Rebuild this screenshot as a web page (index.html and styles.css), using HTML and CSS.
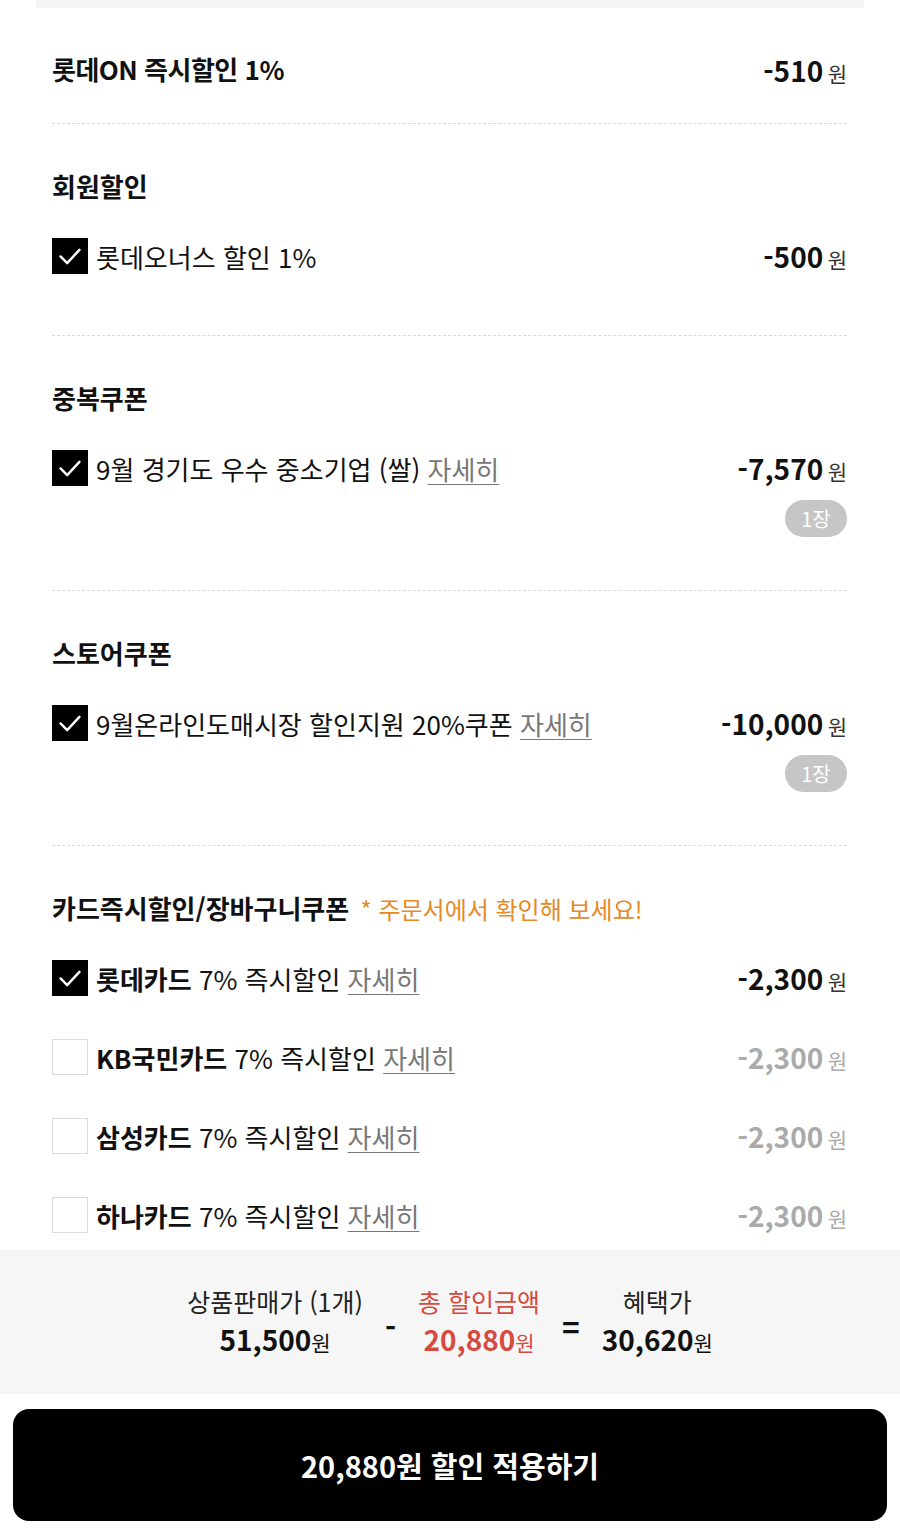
FILE: index.html
```html
<!DOCTYPE html>
<html lang="ko">
<head>
<meta charset="utf-8">
<title>할인 적용</title>
<link rel="stylesheet" href="styles.css">
</head>
<body>
<div class="topbar"></div>
<div class="list">
  <section class="sec sec-first">
    <div class="row">
      <div class="title-lg">롯데ON 즉시할인 1%</div>
      <div class="amt"><b>-510</b> <span>원</span></div>
    </div>
  </section>

  <section class="sec">
    <h2 class="head">회원할인</h2>
    <div class="row">
      <div class="left">
        <span class="cb on"><svg viewBox="0 0 36 36"><path d="M8 18.5 L15 25.5 L28 11.5" /></svg></span>
        <span class="label">롯데오너스 할인 1%</span>
      </div>
      <div class="amt"><b>-500</b> <span>원</span></div>
    </div>
    <div class="pad-b1"></div>
  </section>

  <section class="sec">
    <h2 class="head">중복쿠폰</h2>
    <div class="row">
      <div class="left">
        <span class="cb on"><svg viewBox="0 0 36 36"><path d="M8 18.5 L15 25.5 L28 11.5" /></svg></span>
        <span class="label">9월 경기도 우수 중소기업 (쌀) <a class="more">자세히</a></span>
      </div>
      <div class="amt"><b>-7,570</b> <span>원</span></div>
    </div>
    <div class="badge-row"><span class="badge">1장</span></div>
  </section>

  <section class="sec">
    <h2 class="head">스토어쿠폰</h2>
    <div class="row">
      <div class="left">
        <span class="cb on"><svg viewBox="0 0 36 36"><path d="M8 18.5 L15 25.5 L28 11.5" /></svg></span>
        <span class="label">9월온라인도매시장 할인지원 20%쿠폰 <a class="more">자세히</a></span>
      </div>
      <div class="amt"><b>-10,000</b> <span>원</span></div>
    </div>
    <div class="badge-row"><span class="badge">1장</span></div>
  </section>

  <section class="sec sec-last">
    <h2 class="head">카드즉시할인/장바구니쿠폰 <span class="note">* 주문서에서 확인해 보세요!</span></h2>
    <div class="cards">
      <div class="row">
        <div class="left">
          <span class="cb on"><svg viewBox="0 0 36 36"><path d="M8 18.5 L15 25.5 L28 11.5" /></svg></span>
          <span class="label"><strong>롯데카드</strong> 7% 즉시할인 <a class="more">자세히</a></span>
        </div>
        <div class="amt"><b>-2,300</b> <span>원</span></div>
      </div>
      <div class="row">
        <div class="left">
          <span class="cb"></span>
          <span class="label"><strong>KB국민카드</strong> 7% 즉시할인 <a class="more">자세히</a></span>
        </div>
        <div class="amt off"><b>-2,300</b> <span>원</span></div>
      </div>
      <div class="row">
        <div class="left">
          <span class="cb"></span>
          <span class="label"><strong>삼성카드</strong> 7% 즉시할인 <a class="more">자세히</a></span>
        </div>
        <div class="amt off"><b>-2,300</b> <span>원</span></div>
      </div>
      <div class="row">
        <div class="left">
          <span class="cb"></span>
          <span class="label"><strong>하나카드</strong> 7% 즉시할인 <a class="more">자세히</a></span>
        </div>
        <div class="amt off"><b>-2,300</b> <span>원</span></div>
      </div>
    </div>
  </section>
</div>

<div class="summary">
  <div class="col">
    <div class="s-label">상품판매가 (1개)</div>
    <div class="s-val">51,500<span>원</span></div>
  </div>
  <div class="op">-</div>
  <div class="col red">
    <div class="s-label">총 할인금액</div>
    <div class="s-val">20,880<span>원</span></div>
  </div>
  <div class="op">=</div>
  <div class="col">
    <div class="s-label">혜택가</div>
    <div class="s-val">30,620<span>원</span></div>
  </div>
</div>

<div class="btn-wrap">
  <button class="btn">20,880원 할인 적용하기</button>
</div>
</body>
</html>
```

FILE: styles.css
```css
* { box-sizing: border-box; }
html, body { margin: 0; padding: 0; background: #fff; }
body {
  width: 900px;
  font-family: "Noto Sans CJK KR", "Noto Sans", sans-serif;
  color: #111;
}
.topbar {
  height: 8px;
  margin: 0 36px;
  background: #f5f5f5;
}
.list {
  padding: 0 53px 0 52px;
}
.sec {
  padding-top: 42px;
  padding-bottom: 53px;
  border-bottom: 1px dashed #d9d9d9;
}
.sec-first {
  padding-bottom: 33px;
}
.sec-last {
  border-bottom: none;
  padding-bottom: 15px;
}
.pad-b1 { height: 6px; }
.head {
  margin: 0 0 30px 0;
  height: 40px;
  line-height: 40px;
  font-size: 26px;
  font-weight: 700;
  color: #111;
  white-space: nowrap;
}
.note {
  margin-left: 4px;
  font-size: 24px;
  font-weight: 400;
  color: #e58a25;
}
.row {
  display: flex;
  justify-content: space-between;
  align-items: center;
  height: 40px;
}
.title-lg {
  font-size: 26px;
  font-weight: 700;
  letter-spacing: -0.5px;
  margin-top: -3px;
}
.left {
  display: flex;
  align-items: center;
  gap: 8px;
}
.cb {
  width: 36px;
  height: 36px;
  display: inline-flex;
  align-items: center;
  justify-content: center;
  border: 1px solid #dcdcdc;
  background: #fff;
}
.cb.on {
  background: #000;
  border-color: #000;
}
.cb svg {
  width: 36px;
  height: 36px;
}
.cb svg path {
  fill: none;
  stroke: #fff;
  stroke-width: 2.6;
  stroke-linecap: round;
  stroke-linejoin: round;
}
.label {
  font-size: 26px;
  font-weight: 400;
  color: #111;
  white-space: nowrap;
}
.label strong {
  font-weight: 700;
}
.more {
  color: #777;
  text-decoration: underline;
  text-underline-offset: 4px;
  text-decoration-thickness: 1px;
}
.amt {
  white-space: nowrap;
}
.amt b {
  font-size: 28px;
  font-weight: 700;
  color: #111;
}
.amt span {
  font-size: 21px;
  color: #333;
}
.amt.off b, .amt.off span {
  color: #aaa;
}
.badge-row {
  display: flex;
  justify-content: flex-end;
  margin-top: 12px;
}
.badge {
  display: inline-flex;
  align-items: center;
  justify-content: center;
  width: 62px;
  height: 37px;
  border-radius: 19px;
  background: #c6c6c6;
  color: #fff;
  font-size: 20px;
}
.cards {
  display: flex;
  flex-direction: column;
  gap: 39px;
}
.summary {
  height: 144px;
  background: #f6f6f6;
  display: flex;
  justify-content: center;
  align-items: center;
  gap: 22px;
}
.col {
  text-align: center;
}
.s-label {
  font-size: 25px;
  line-height: 36px;
  color: #222;
}
.s-val {
  font-size: 28px;
  line-height: 40px;
  font-weight: 700;
  color: #111;
}
.s-val span {
  font-size: 21px;
  font-weight: 400;
}
.red .s-label, .red .s-val {
  color: #d84a40;
}
.op {
  font-size: 30px;
  font-weight: 700;
  margin-top: 8px;
}
.btn-wrap {
  padding: 15px 13px 13px;
}
.btn {
  width: 100%;
  height: 112px;
  border: none;
  border-radius: 16px;
  background: #000;
  color: #fff;
  font-family: "Noto Sans CJK KR", "Noto Sans", sans-serif;
  font-size: 29px;
  font-weight: 700;
}
```
